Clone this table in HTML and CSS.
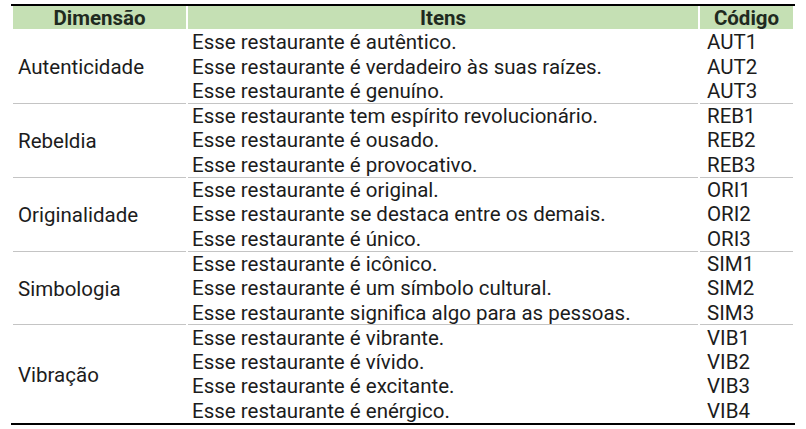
FILE: index.html
```html
<!DOCTYPE html>
<html lang="pt">
<head>
<meta charset="utf-8">
<link rel="stylesheet" href="styles.css">
</head>
<body>
<table class="tbl">
  <thead>
    <tr><th class="c-dim">Dimensão</th><th class="c-item">Itens</th><th class="c-cod">Código</th></tr>
  </thead>
  <tbody>
    <tr class="first"><td class="dim" rowspan="3">Autenticidade</td><td class="item">Esse restaurante é autêntico.</td><td class="cod">AUT1</td></tr>
    <tr><td class="item">Esse restaurante é verdadeiro às suas raízes.</td><td class="cod">AUT2</td></tr>
    <tr><td class="item">Esse restaurante é genuíno.</td><td class="cod">AUT3</td></tr>
    <tr class="first sep"><td class="dim" rowspan="3">Rebeldia</td><td class="item">Esse restaurante tem espírito revolucionário.</td><td class="cod">REB1</td></tr>
    <tr><td class="item">Esse restaurante é ousado.</td><td class="cod">REB2</td></tr>
    <tr><td class="item">Esse restaurante é provocativo.</td><td class="cod">REB3</td></tr>
    <tr class="first sep"><td class="dim" rowspan="3">Originalidade</td><td class="item">Esse restaurante é original.</td><td class="cod">ORI1</td></tr>
    <tr><td class="item">Esse restaurante se destaca entre os demais.</td><td class="cod">ORI2</td></tr>
    <tr><td class="item">Esse restaurante é único.</td><td class="cod">ORI3</td></tr>
    <tr class="first sep"><td class="dim" rowspan="3">Simbologia</td><td class="item">Esse restaurante é icônico.</td><td class="cod">SIM1</td></tr>
    <tr><td class="item">Esse restaurante é um símbolo cultural.</td><td class="cod">SIM2</td></tr>
    <tr><td class="item">Esse restaurante significa algo para as pessoas.</td><td class="cod">SIM3</td></tr>
    <tr class="first sep"><td class="dim" rowspan="4">Vibração</td><td class="item">Esse restaurante é vibrante.</td><td class="cod">VIB1</td></tr>
    <tr><td class="item">Esse restaurante é vívido.</td><td class="cod">VIB2</td></tr>
    <tr><td class="item">Esse restaurante é excitante.</td><td class="cod">VIB3</td></tr>
    <tr><td class="item">Esse restaurante é enérgico.</td><td class="cod">VIB4</td></tr>
  </tbody>
</table>
</body>
</html>
```

FILE: styles.css
```css
html, body {
  margin: 0;
  background: #ffffff;
}
body {
  padding: 4px 0 0 11px;
  font-family: Roboto, "Liberation Sans", sans-serif;
  color: #1c1c1c;
}
.tbl {
  border-collapse: separate;
  border-spacing: 2px 0;
  width: 784px;
  table-layout: fixed;
  border-top: 2px solid #000;
  border-bottom: 2px solid #000;
  font-size: 20.5px;
}
.tbl th {
  background: #c5e0b4;
  font-weight: 700;
  height: 23.3px;
  padding: 0;
  line-height: 22px;
  color: #1f2a1f;
  text-align: center;
}
.c-dim { width: 173px; }
.c-item { width: 510px; }
.c-cod { width: 93px; }
.tbl td {
  box-sizing: border-box;
  height: 24.6px;
  padding: 1px 0 0;
  line-height: 22px;
  vertical-align: middle;
  white-space: nowrap;
}
.tbl td.dim { padding-left: 5px; }
.tbl td.item { padding-left: 4px; }
.tbl td.cod { padding-left: 7px; }
.tbl tr.sep td {
  border-top: 1.5px solid #c4c4c4;
}
```
